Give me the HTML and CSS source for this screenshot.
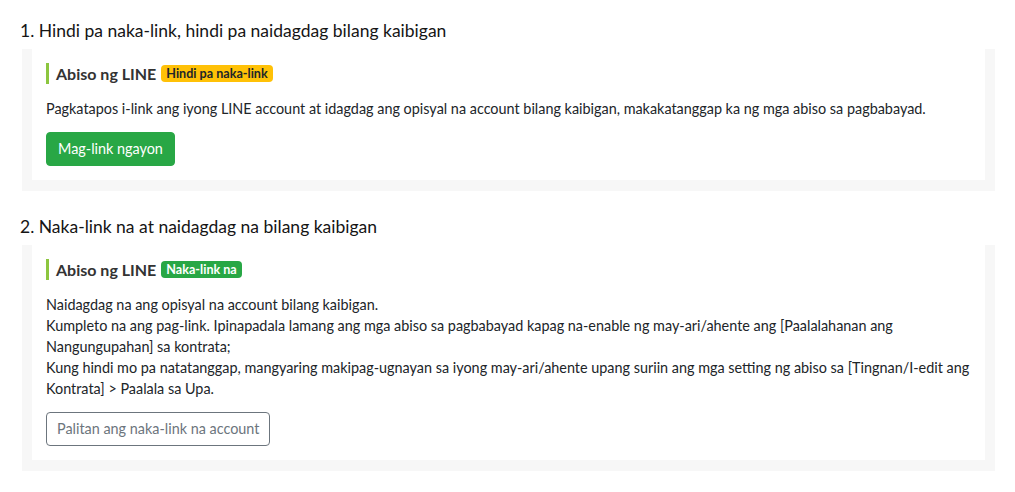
FILE: index.html
```html
<!DOCTYPE html>
<html lang="tl">
<head>
<meta charset="utf-8">
<title>Abiso ng LINE</title>
<link rel="stylesheet" href="styles.css">
</head>
<body>
<main class="page">
  <section class="step">
    <h2 class="step-title">1. Hindi pa naka-link, hindi pa naidagdag bilang kaibigan</h2>
    <div class="panel">
      <div class="card">
        <div class="card-head">
          <span class="card-name">Abiso ng LINE</span>
          <span class="badge badge-warn">Hindi pa naka-link</span>
        </div>
        <p class="card-text">Pagkatapos i-link ang iyong LINE account at idagdag ang opisyal na account bilang kaibigan, makakatanggap ka ng mga abiso sa pagbabayad.</p>
        <button class="btn btn-green" type="button">Mag-link ngayon</button>
      </div>
    </div>
  </section>
  <section class="step">
    <h2 class="step-title">2. Naka-link na at naidagdag na bilang kaibigan</h2>
    <div class="panel">
      <div class="card">
        <div class="card-head">
          <span class="card-name">Abiso ng LINE</span>
          <span class="badge badge-ok">Naka-link na</span>
        </div>
        <p class="card-text">Naidagdag na ang opisyal na account bilang kaibigan.<br>Kumpleto na ang pag-link. Ipinapadala lamang ang mga abiso sa pagbabayad kapag na-enable ng may-ari/ahente ang [Paalalahanan ang Nangungupahan] sa kontrata;<br>Kung hindi mo pa natatanggap, mangyaring makipag-ugnayan sa iyong may-ari/ahente upang suriin ang mga setting ng abiso sa [Tingnan/I-edit ang Kontrata] &gt; Paalala sa Upa.</p>
        <button class="btn btn-outline" type="button">Palitan ang naka-link na account</button>
      </div>
    </div>
  </section>
</main>
</body>
</html>
```
FILE: styles.css
```css
html, body {
  margin: 0;
  background: #ffffff;
}

body {
  font-family: "Lato", "Noto Sans", sans-serif;
  color: #212529;
  font-size: 14.4px;
}

.page {
  padding: 20px 20px 0 20px;
  display: flex;
  flex-direction: column;
  gap: 25px;
}

.step-title {
  margin: 0 0 7px 0;
  font-size: 17.5px;
  font-weight: 400;
  line-height: 22px;
  color: #151515;
}

.panel {
  margin-left: 2px;
  background: #f7f7f7;
  padding: 0 10px 11px 10px;
}

.card {
  background: #ffffff;
  padding: 14px 12px 14px 14px;
}

.card-head {
  display: flex;
  align-items: center;
  gap: 5px;
  border-left: 3px solid #8cc63f;
  padding-left: 7px;
  height: 21px;
}

.card-name {
  font-size: 16px;
  font-weight: 700;
  color: #333333;
}

.badge {
  font-size: 12.6px;
  font-weight: 700;
  line-height: 17px;
  padding: 0 5px;
  border-radius: 4px;
}

.badge-warn {
  background: #ffc107;
  color: #212529;
}

.badge-ok {
  background: #28a745;
  color: #ffffff;
}

.card-text {
  margin: 14px 0 13px 0;
  line-height: 21px;
}

.btn {
  font-family: inherit;
  font-size: 14.4px;
  line-height: 20px;
  padding: 6px 11px;
  border-radius: 4px;
  cursor: pointer;
}

.btn-green {
  background: #28a745;
  border: 1px solid #28a745;
  color: #ffffff;
}

.btn-outline {
  background: #ffffff;
  border: 1px solid #6c757d;
  color: #6c757d;
  padding: 6px 10px;
}
```
